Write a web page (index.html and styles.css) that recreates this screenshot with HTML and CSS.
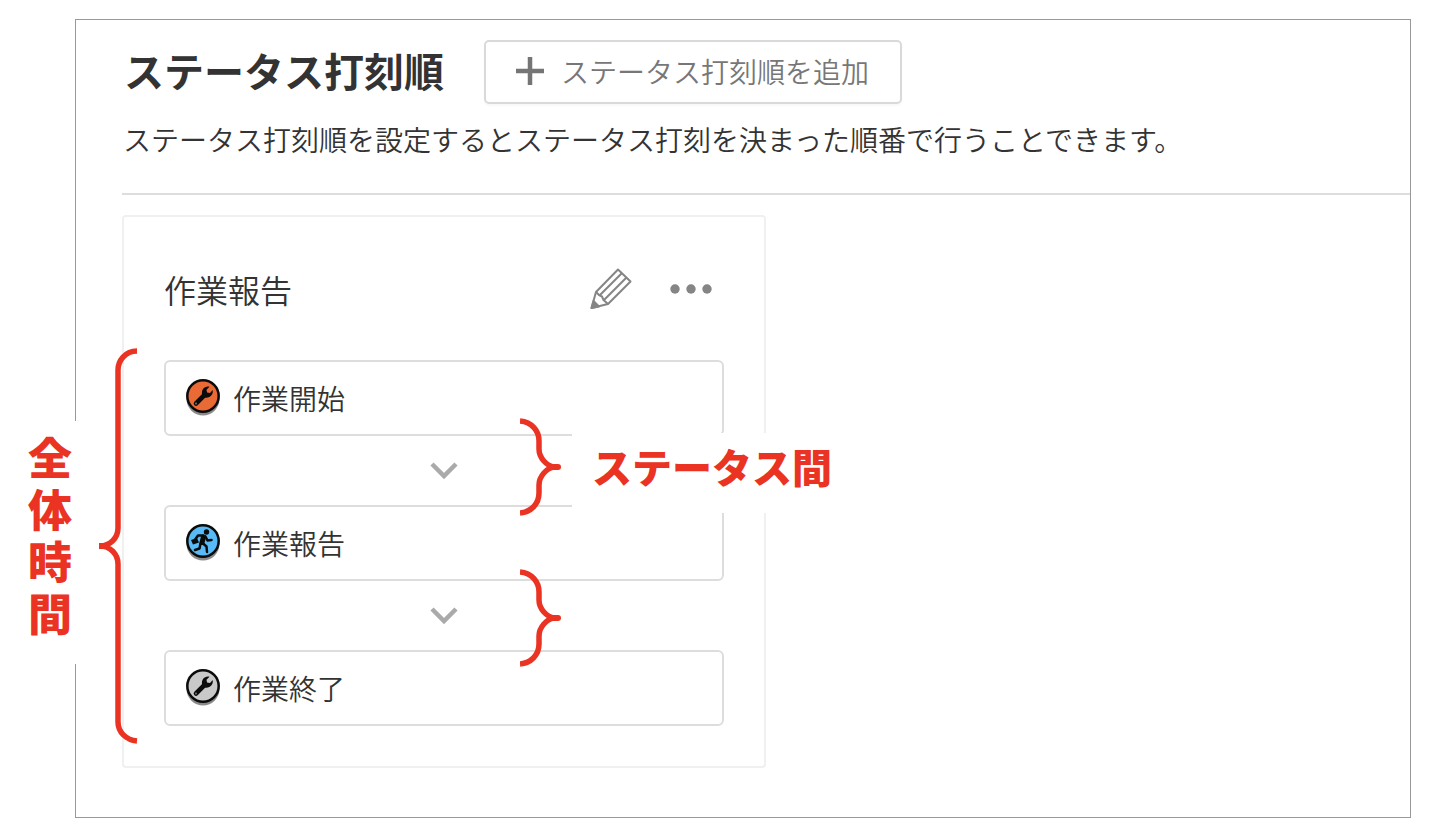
FILE: index.html
```
<!DOCTYPE html>
<html lang="ja">
<head>
    <meta charset="UTF-8">
    <meta name="viewport" content="width=device-width, initial-scale=1.0">
    <title>ステータス打刻順</title>
    <link rel="stylesheet" href="styles.css">
</head>
<body>

    <!-- Shared icons -->
    <svg class="sprite" aria-hidden="true">
        <symbol id="wrench" viewBox="0 0 36 40">
            <path d="M11 25.500 L20 16.500" stroke="#0b0b0b" stroke-width="4.600" stroke-linecap="round"/>
            <path d="M18.500 19 C16.500 17 16.300 13.500 18 11 C19.500 9 22 8 24.500 8.700 L21.500 11.700 L22 14.600 L25 15 L27.700 12 C28.300 15 27 17.500 24.800 18.700 C22.500 20 20 20 18.500 19 Z" fill="#0b0b0b"/>
            <circle cx="11" cy="25.500" r="1" fill="#777"/>
        </symbol>
        <symbol id="runner" viewBox="0 0 36 40">
            <circle cx="21.500" cy="9" r="2.700" fill="#0b0b0b"/>
            <path d="M18.500 14 L17 19.500" stroke="#0b0b0b" stroke-width="5" stroke-linecap="round"/>
            <path d="M18 12.500 L13 12.500 L10.500 16 M20.500 13.500 L22.500 17.500 L26.500 17 M17.500 20 L21.500 23.500 L22 29 M15.500 20.500 L14.500 25.500 L10 27" fill="none" stroke="#0b0b0b" stroke-width="2.500" stroke-linecap="round" stroke-linejoin="round"/>
            <path d="M6 17 L12 15 L14 19.500 L8 21.500 Z" fill="#0b0b0b"/>
        </symbol>
        <symbol id="small-brace" viewBox="0 0 42 98">
            <path d="M0 3 C12 4 19 13 19 23 V31 C19 40 27 48 34 49 C27 50 19 58 19 67 V75 C19 86 11 94 0 95" fill="none" stroke="#ea3323" stroke-width="5.500"/>
            <path d="M30 49 H38" stroke="#ea3323" stroke-width="6" stroke-linecap="round"/>
        </symbol>
    </svg>

    <main class="panel">
        <header class="panel-header">
            <div class="heading-row">
                <h1>ステータス打刻順</h1>
                <button type="button" class="add-button">
                    <svg class="plus" viewBox="0 0 28 28" aria-hidden="true">
                        <path d="M14 0 V28 M0 14 H28" stroke="#757575" stroke-width="4.500"/>
                    </svg>
                    ステータス打刻順を追加
                </button>
            </div>
            <p class="description">ステータス打刻順を設定するとステータス打刻を決まった順番で行うことできます。</p>
        </header>

        <section class="card">
            <div class="card-header">
                <h2>作業報告</h2>
                <div class="card-actions">
                    <button type="button" class="icon-button" aria-label="編集">
                        <svg class="pencil" viewBox="0 0 42 42" fill="none" stroke="#858585" stroke-width="2" stroke-linejoin="round" aria-hidden="true">
                            <path d="M6 24 L28 1.500 L40.500 13.500 L18 36 L1.500 40 Z"/>
                            <path d="M6 24 L9 27 L12 28.500 L13.500 32 L18 36 M9.500 27.500 L32 5 M14 32 L36.500 9.500"/>
                            <path d="M3.500 33 L1.500 40 L9 38.500 Z" fill="#858585"/>
                        </svg>
                    </button>
                    <button type="button" class="icon-button" aria-label="メニュー">
                        <svg class="dots" viewBox="0 0 42 42" fill="#858585" aria-hidden="true">
                            <circle cx="5" cy="21" r="4.700"/>
                            <circle cx="21" cy="21" r="4.700"/>
                            <circle cx="37" cy="21" r="4.700"/>
                        </svg>
                    </button>
                </div>
            </div>

            <ol class="steps">
                <li class="step">
                    <svg class="badge" viewBox="0 0 36 40" aria-hidden="true">
                        <circle cx="18" cy="21" r="16.500" fill="#8b8b8b"/>
                        <circle cx="18" cy="18" r="15.700" fill="#ea6a36" stroke="#0b0b0b" stroke-width="2.500"/>
                        <use href="#wrench"/>
                    </svg>
                    作業開始
                </li>
                <li class="arrow" aria-hidden="true">
                    <svg class="chevron" viewBox="0 0 28 18"><path d="M2 2 L14 14 L26 2" fill="none" stroke="#aaa" stroke-width="4.500"/></svg>
                </li>
                <li class="step">
                    <svg class="badge" viewBox="0 0 36 40" aria-hidden="true">
                        <circle cx="18" cy="21" r="16.500" fill="#8b8b8b"/>
                        <circle cx="18" cy="18" r="15.700" fill="#58bbf7" stroke="#0b0b0b" stroke-width="2.500"/>
                        <use href="#runner"/>
                    </svg>
                    作業報告
                </li>
                <li class="arrow" aria-hidden="true">
                    <svg class="chevron" viewBox="0 0 28 18"><path d="M2 2 L14 14 L26 2" fill="none" stroke="#aaa" stroke-width="4.500"/></svg>
                </li>
                <li class="step">
                    <svg class="badge" viewBox="0 0 36 40" aria-hidden="true">
                        <circle cx="18" cy="21" r="16.500" fill="#8b8b8b"/>
                        <circle cx="18" cy="18" r="15.700" fill="#c9c9c9" stroke="#0b0b0b" stroke-width="2.500"/>
                        <use href="#wrench"/>
                    </svg>
                    作業終了
                </li>
            </ol>

            <!-- Red notes laid over the card -->
            <div class="note note-total">全体時間</div>
            <svg class="brace brace-total" viewBox="0 0 40 396" aria-hidden="true">
                <path d="M39 3 C27 3 20 13 20 22 V180 C20 190 12 198 2 198 C12 198 20 206 20 216 V374 C20 384 28 392 39 393" fill="none" stroke="#ea3323" stroke-width="5.500"/>
                <path d="M1 198 H8" stroke="#ea3323" stroke-width="6"/>
            </svg>
            <div class="note note-between">ステータス間</div>
            <svg class="brace brace-first" aria-hidden="true"><use href="#small-brace"/></svg>
            <svg class="brace brace-second" aria-hidden="true"><use href="#small-brace"/></svg>
        </section>
    </main>

</body>
</html>
```
FILE: styles.css
```
* {
    margin: 0;
    padding: 0;
    box-sizing: border-box;
}
body {
    background-color: #fff;
    color: #333;
    font-family: "Noto Sans CJK JP", sans-serif;
    font-size: 28px;
    font-weight: 350;
    line-height: 40px;
}
button {
    font: inherit;
    background: none;
    border: none;
    cursor: pointer;
}
.sprite {
    display: none;
}
.panel {
    margin: 19px 19px 14px 75px;
    padding: 20px 0 49px 46px;
    border: 1px solid #999;
}
.panel-header {
    padding-bottom: 34px;
    border-bottom: 2px solid #ddd;
}
.heading-row {
    display: flex;
    align-items: center;
    gap: 40px;
    padding-left: 2px;
}
h1 {
    padding-bottom: 4px;
    font-size: 40px;
    font-weight: 700;
    line-height: 60px;
}
.add-button {
    display: flex;
    align-items: center;
    gap: 17px;
    height: 64px;
    padding: 0 31px 2px 30px;
    color: #777;
    border: 2px solid #d9d9d9;
    border-radius: 5px;
    box-shadow: 0 2px 2px rgba(0, 0, 0, 0.03);
}
.plus {
    width: 28px;
    height: 28px;
}
.description {
    margin-top: 15px;
    padding-left: 1px;
}
.card {
    position: relative;
    max-width: 644px;
    margin-top: 20px;
    padding: 40px;
    border: 2px solid #f0f0f0;
    border-radius: 4px;
}
.card-header {
    display: flex;
    justify-content: space-between;
    align-items: center;
    height: 64px;
    margin-bottom: 39px;
}
h2 {
    font-size: 32px;
    font-weight: 350;
}
.card-actions {
    display: flex;
    gap: 38px;
    padding-right: 12px;
}
.icon-button {
    display: flex;
}
.pencil,
.dots {
    width: 42px;
    height: 42px;
}
.steps {
    list-style: none;
}
.step {
    display: flex;
    align-items: center;
    gap: 12px;
    height: 76px;
    padding: 0 19px;
    border: 2px solid #ddd;
    border-radius: 6px;
}
.badge {
    width: 36px;
    height: 40px;
}
.arrow {
    display: flex;
    justify-content: center;
    align-items: center;
    height: 69px;
}
.chevron {
    width: 28px;
    height: 18px;
}
.note {
    position: absolute;
    color: #ea3323;
    background-color: #fff;
    font-weight: 900;
}
.note-total {
    top: 204px;
    left: -96px;
    width: 50px;
    height: 243px;
    padding-top: 9px;
    font-size: 44px;
    line-height: 52px;
    word-break: break-all;
}
.note-between {
    top: 216px;
    left: 448px;
    padding: 0 20px 14px;
    font-size: 40px;
    line-height: 66px;
    white-space: nowrap;
}
.brace {
    position: absolute;
}
.brace-total {
    top: 131px;
    left: -26px;
    width: 40px;
    height: 396px;
}
.brace-first,
.brace-second {
    left: 396px;
    width: 42px;
    height: 98px;
}
.brace-first {
    top: 201px;
}
.brace-second {
    top: 352px;
}
```
